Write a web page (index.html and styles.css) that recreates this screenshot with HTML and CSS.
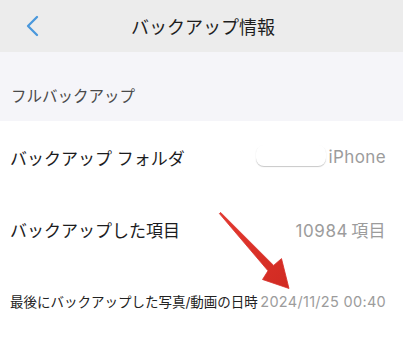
FILE: index.html
```html
<!DOCTYPE html>
<html lang="ja">
<head>
<meta charset="utf-8">
<link rel="stylesheet" href="styles.css">
</head>
<body>
<div class="screen">
  <header class="navbar">
    <div class="nav-left">
      <svg class="back" width="14" height="22" viewBox="0 0 14 22"><polyline points="11,2 2,11 11,20" fill="none" stroke="#4a98dc" stroke-width="2.3" stroke-linecap="round" stroke-linejoin="round"/></svg>
    </div>
    <h1 class="title">バックアップ情報</h1>
    <div class="nav-right"></div>
  </header>
  <div class="section-head">フルバックアップ</div>
  <div class="list">
    <div class="row">
      <span class="label">バックアップ フォルダ</span>
      <span class="value value-device">iPhone<span class="redact"></span></span>
    </div>
    <div class="row">
      <span class="label">バックアップした項目</span>
      <span class="value"><span class="num">10984</span><span class="unit">項目</span></span>
    </div>
    <div class="row row-small">
      <span class="label">最後にバックアップした写真/動画の日時</span>
      <span class="value">2024/11/25 00:40</span>
    </div>
  </div>
  <svg class="arrow" width="403" height="356" viewBox="0 0 403 356">
    <defs>
      <linearGradient id="ag" x1="0" y1="0" x2="1" y2="1">
        <stop offset="0" stop-color="#e5382e"/>
        <stop offset="1" stop-color="#d02a22"/>
      </linearGradient>
    </defs>
    <polygon points="220.6,212.4 273.6,265.4 281.5,258.6 289,288.5 262.5,279.5 268,270.8 219.4,213.6" fill="url(#ag)" stroke="#d8302a" stroke-width="0.8" stroke-linejoin="round"/>
  </svg>
</div>
</body>
</html>
```
FILE: styles.css
```css
html, body {
  margin: 0;
  padding: 0;
  background: #ffffff;
}
body {
  font-family: "Inter", "Noto Sans CJK JP", sans-serif;
  color: #1c1c1e;
}
.screen {
  position: relative;
  width: 403px;
  height: 356px;
  overflow: hidden;
  background: #ffffff;
}
.navbar {
  height: 52px;
  background: #ececec;
  display: grid;
  grid-template-columns: 1fr auto 1fr;
  align-items: center;
}
.nav-left {
  padding-left: 26px;
  display: flex;
  align-items: center;
}
.back {
  display: block;
}
.title {
  margin: 0;
  padding-left: 3px;
  font-size: 18px;
  font-weight: 400;
  color: #1e1e1e;
  letter-spacing: 0;
}
.section-head {
  height: 69px;
  box-sizing: border-box;
  background: #f5f5f9;
  display: flex;
  align-items: flex-end;
  padding: 0 10px 14px 11px;
  font-size: 15.5px;
  line-height: 20px;
  color: #4a4a4a;
}
.list {
  display: flex;
  flex-direction: column;
}
.row {
  height: 72px;
  display: flex;
  align-items: center;
  justify-content: space-between;
  padding: 0 17px 0 10px;
}
.label {
  font-size: 17px;
  color: #1c1c1e;
}
.value {
  font-size: 17px;
  color: #9c9c9c;
  letter-spacing: 0.4px;
}
.value-device {
  position: relative;
}
.redact {
  position: absolute;
  right: 60px;
  top: -2px;
  width: 70px;
  height: 21px;
  background: #ffffff;
  border-radius: 8px;
  box-shadow: 0 1px 1px rgba(0, 0, 0, 0.22);
}
.num {
  letter-spacing: 0.6px;
}
.unit {
  margin-left: 3px;
}
.row-small .label {
  font-size: 13.5px;
  color: #222;
}
.row-small .value {
  font-size: 14.5px;
  letter-spacing: 0.3px;
}
.arrow {
  position: absolute;
  left: 0;
  top: 0;
  pointer-events: none;
}
```
